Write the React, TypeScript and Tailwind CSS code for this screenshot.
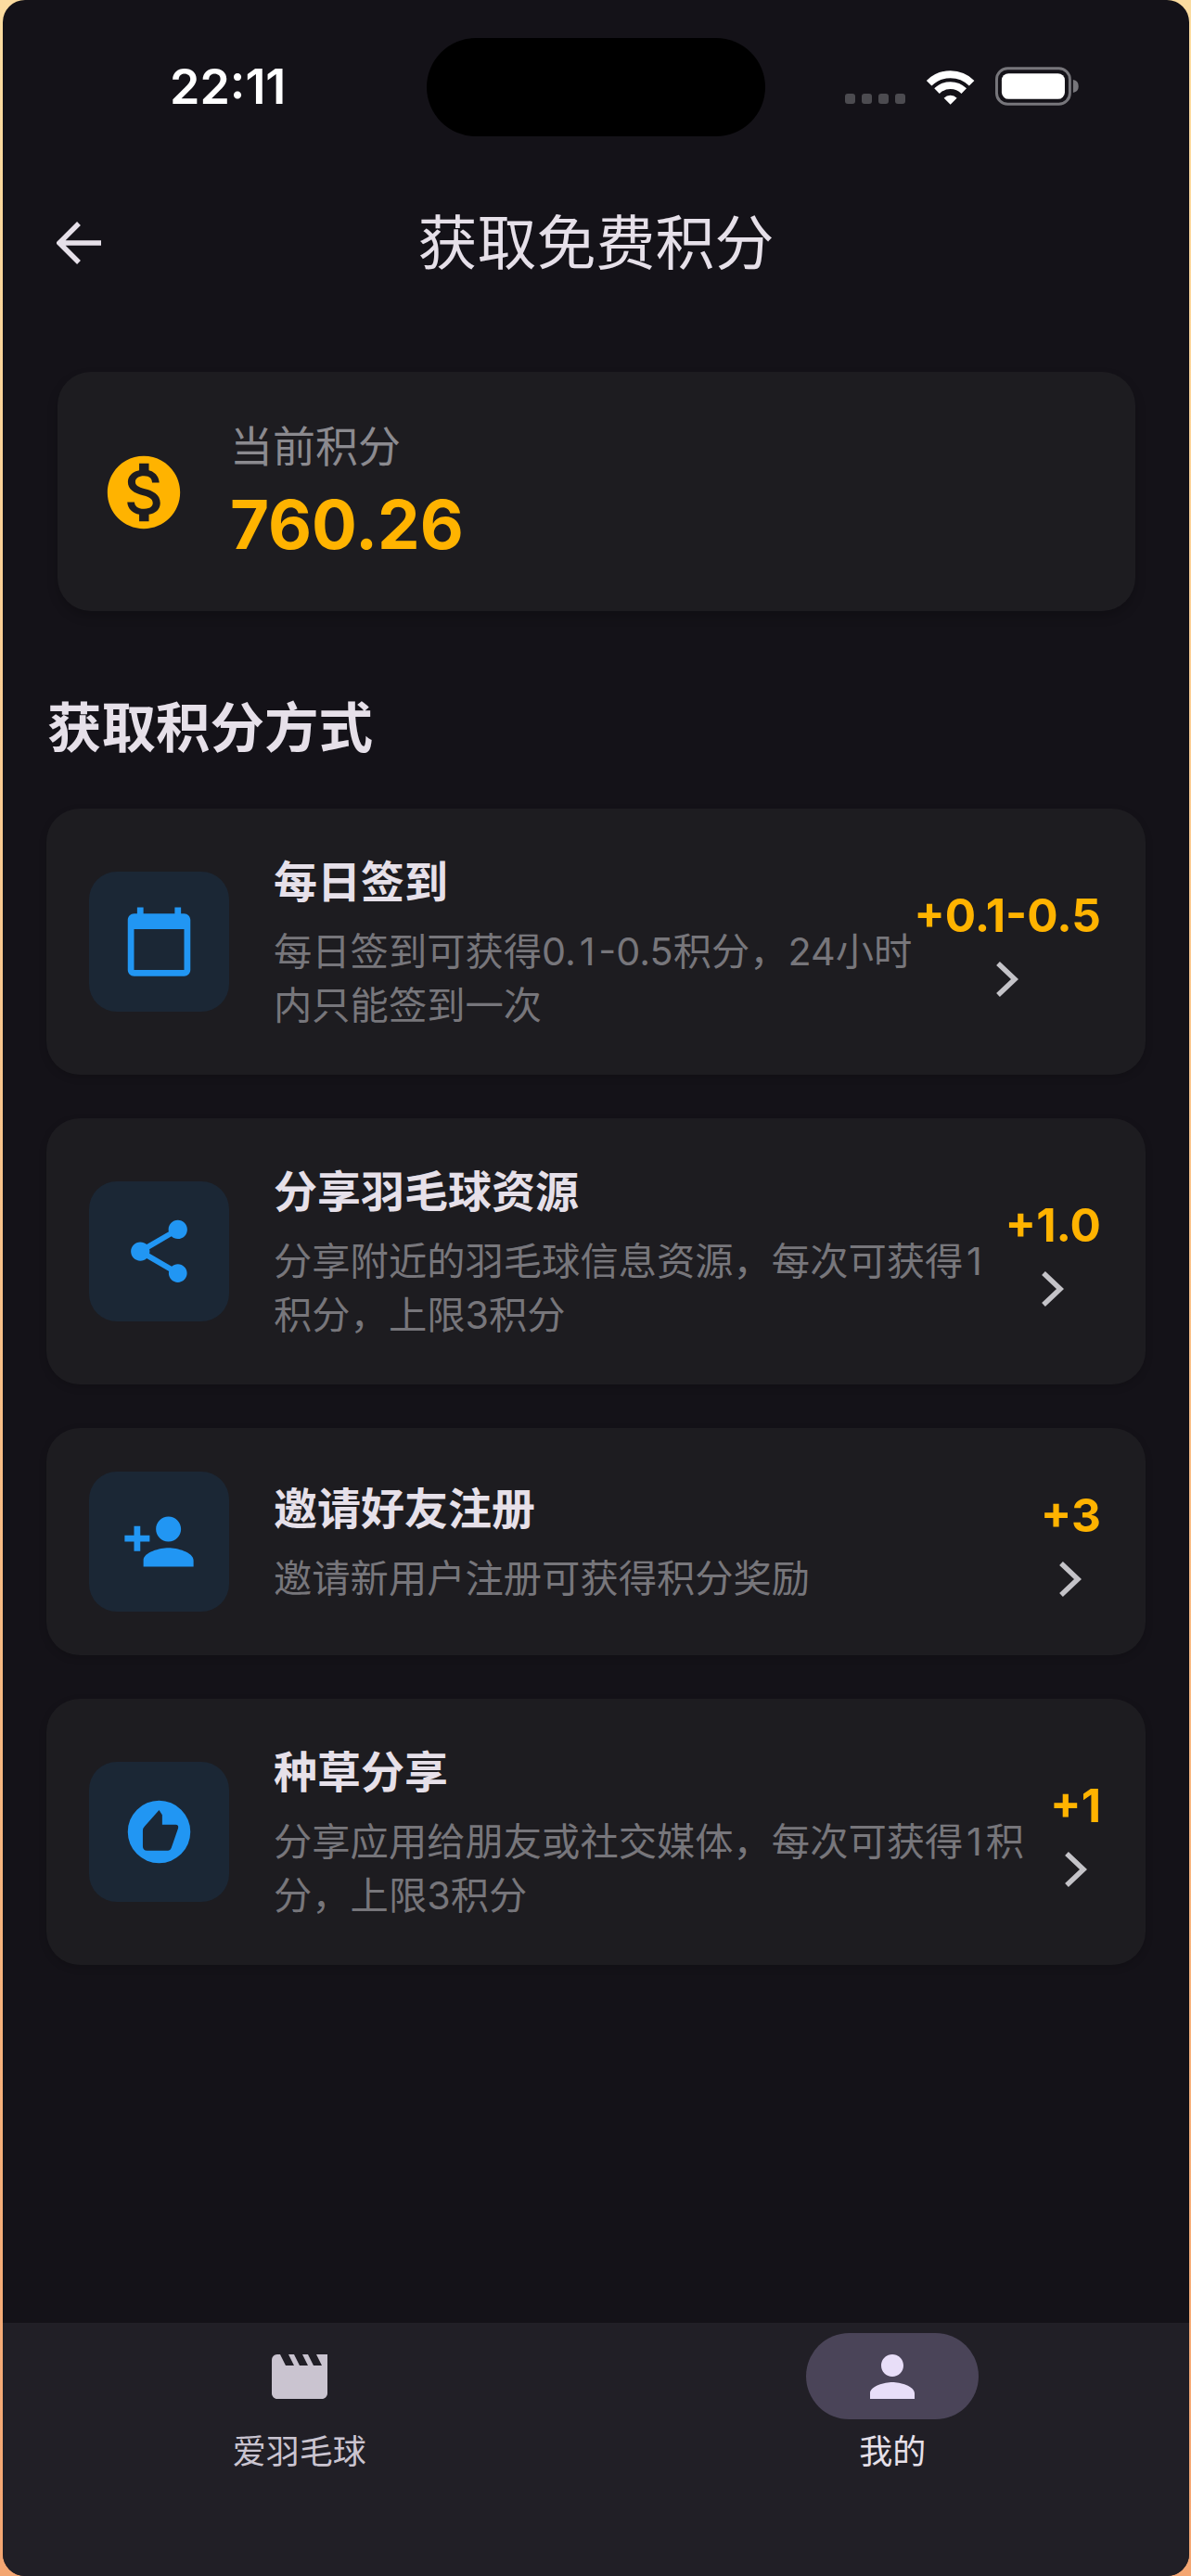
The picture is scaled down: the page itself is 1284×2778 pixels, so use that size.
import { MdCalendarToday, MdMonetizationOn, MdMovie, MdPerson, MdPersonAdd, MdShare } from "react-icons/md";
import type { ReactNode } from "react";

const font = "font-['Inter','Noto_Sans_CJK_SC',sans-serif]";

function ThumbBadge() {
  return (
    <svg viewBox="0 0 24 24" className="w-[81px] h-[81px]" fill="#2196f3" fillRule="evenodd">
      <path d="M12 2a10 10 0 1 0 0 20 10 10 0 0 0 0-20zM12 5l1 1.6v3.1h4.3q1 0 .8 1.1l-2.2 6.4q-.3.8-1 .8H8.2q-1.4 0-1.4-1.4v-5q0-.8.6-1.4z" />
    </svg>
  );
}

function Chevron() {
  return (
    <svg viewBox="0 0 48 72" className="w-[48px] h-[72px]" fill="none" stroke="#c4c3c8" strokeWidth="5.5">
      <path d="M14 19l18 17-18 17" />
    </svg>
  );
}

function StatusIcons() {
  return (
    <div className="flex items-end w-[253px]">
      <div className="flex gap-[7px] mb-[2px]">
        {[0, 1, 2, 3].map((d) => (
          <div key={d} className="w-[11px] h-[11px] rounded-[3px] bg-[#4c4b50]" />
        ))}
      </div>
      <svg viewBox="0 0 56 40" className="w-[56px] h-[40px] ml-[21px] mb-[1px]" fill="none" stroke="#fff" strokeWidth="8">
        <path d="M4.7 16.7a33 33 0 0 1 46.6 0" />
        <path d="M13.2 25.2a21 21 0 0 1 29.6 0" />
        <path d="M28 40 20.9 32.9a10 10 0 0 1 14.2 0z" fill="#fff" stroke="none" />
      </svg>
      <svg viewBox="0 0 92 42" className="w-[92px] h-[42px] ml-[21px]">
        <rect x="1.5" y="1.5" width="80" height="39" rx="12" fill="none" stroke="#77767b" strokeWidth="3" />
        <rect x="7" y="7" width="69" height="28" rx="7.5" fill="#fff" />
        <path d="M85 14q6 1 6 7t-6 7z" fill="#77767b" />
      </svg>
    </div>
  );
}

type Way = {
  title: string;
  desc: string;
  points: string;
  icon: ReactNode;
};

// Hair spaces around the digit one give it the side room of the system font.
const ways: Way[] = [
  {
    title: "每日签到",
    desc: "每日签到可获得0.\u200a1\u200a-0.5积分，24小时内只能签到一次",
    points: "+0.1-0.5",
    icon: <MdCalendarToday size={81} color="#2196f3" />,
  },
  {
    title: "分享羽毛球资源",
    desc: "分享附近的羽毛球信息资源，每次可获得\u200a1\u200a积分，上限3积分",
    points: "+1.0",
    icon: <MdShare size={81} color="#2196f3" />,
  },
  {
    title: "邀请好友注册",
    desc: "邀请新用户注册可获得积分奖励",
    points: "+3",
    icon: <MdPersonAdd size={81} color="#2196f3" />,
  },
  {
    title: "种草分享",
    desc: "分享应用给朋友或社交媒体，每次可获得\u200a1\u200a积分，上限3积分",
    points: "+1",
    icon: <ThumbBadge />,
  },
];

function WayRow({ way }: { way: Way }) {
  return (
    <div className="flex items-center rounded-[36px] bg-[#1d1c20] pl-[46px] pr-[48px] py-[46px] shadow-[0_3px_8px_rgba(0,0,0,0.15)]">
      <div className="flex items-center justify-center shrink-0 w-[151px] h-[151px] rounded-[30px] bg-[#1b2735]">
        {way.icon}
      </div>
      <div className="flex-1 min-w-0 ml-[48px]">
        <div className="text-[47px] leading-[66px] font-semibold text-[#e6e0e9]">{way.title}</div>
        <div className="mt-[13px] text-[41.3px] leading-[58px] text-[#77767b]">{way.desc}</div>
      </div>
      <div className="flex flex-col items-center shrink-0 pt-[15px]">
        <div className="text-[49.5px] leading-[66px] font-bold text-[#ffb300]">{way.points}</div>
        <Chevron />
      </div>
    </div>
  );
}

export default function App() {
  return (
    <div className={`${font} w-[1284px] h-[2778px] pl-[3px] pr-[2px] bg-gradient-to-b from-[#fbdca0] to-[#f4a672]`}>
      <div className="flex flex-col h-full overflow-hidden rounded-[24px] bg-[#141218]">
        <div className="flex items-start h-[174px] pl-[180px] pt-[41px]">
          <div className="w-[129px] mt-[20px] text-[52px] leading-[66px] font-semibold text-white whitespace-nowrap">22:11</div>
          <div className="ml-[148px] w-[365px] h-[106px] rounded-full bg-black" />
          <div className="ml-[86px] mt-[31px]">
            <StatusIcons />
          </div>
        </div>

        <div className="relative flex items-center justify-center h-[176px]">
          <svg viewBox="0 0 48 46" className="absolute left-[58px] top-[65px] w-[48px] h-[46px]" fill="none" stroke="#e6e0e9" strokeWidth="5.5">
            <path d="M24 2 3 23l21 21M3 23h45" />
          </svg>
          <div className="text-[64px] leading-[80px] text-[#e6e0e9]">获取免费积分</div>
        </div>

        <div className="flex-1 px-[47px] pt-[51px]">
          <div className="flex items-center h-[258px] ml-[12px] mr-[11px] rounded-[36px] bg-[#1d1c20] pl-[46px] shadow-[0_6px_12px_rgba(0,0,0,0.2)]">
            <MdMonetizationOn size={94} color="#ffb300" className="mt-[2px]" />
            <div className="ml-[46px]">
              <div className="text-[46px] leading-[64px] text-[#8b8a8f]">当前积分</div>
              <div className="mt-[8px] text-[72.5px] leading-[90px] font-bold text-[#ffb300]">760.26</div>
            </div>
          </div>

          <div className="pl-[1px] mt-[86px] text-[58.5px] leading-[80px] font-semibold text-[#e6e0e9]">获取积分方式</div>

          <div className="flex flex-col gap-[47px] mt-[47px]">
            {ways.map((way) => (
              <WayRow key={way.title} way={way} />
            ))}
          </div>
        </div>

        <div className="flex h-[273px] bg-[#211f26] pt-[11px]">
          <div className="flex-1 flex flex-col items-center">
            <div className="flex items-center justify-center w-[186px] h-[93px] rounded-full">
              <MdMovie size={72} color="#cac4d0" />
            </div>
            <div className="mt-[8px] text-[36px] leading-[54px] text-[#cac4d0]">爱羽毛球</div>
          </div>
          <div className="flex-1 flex flex-col items-center">
            <div className="flex items-center justify-center w-[186px] h-[93px] rounded-full bg-[#4a4458]">
              <MdPerson size={72} color="#e8def8" />
            </div>
            <div className="mt-[8px] text-[36px] leading-[54px] text-[#e6e0e9]">我的</div>
          </div>
        </div>
      </div>
    </div>
  );
}
